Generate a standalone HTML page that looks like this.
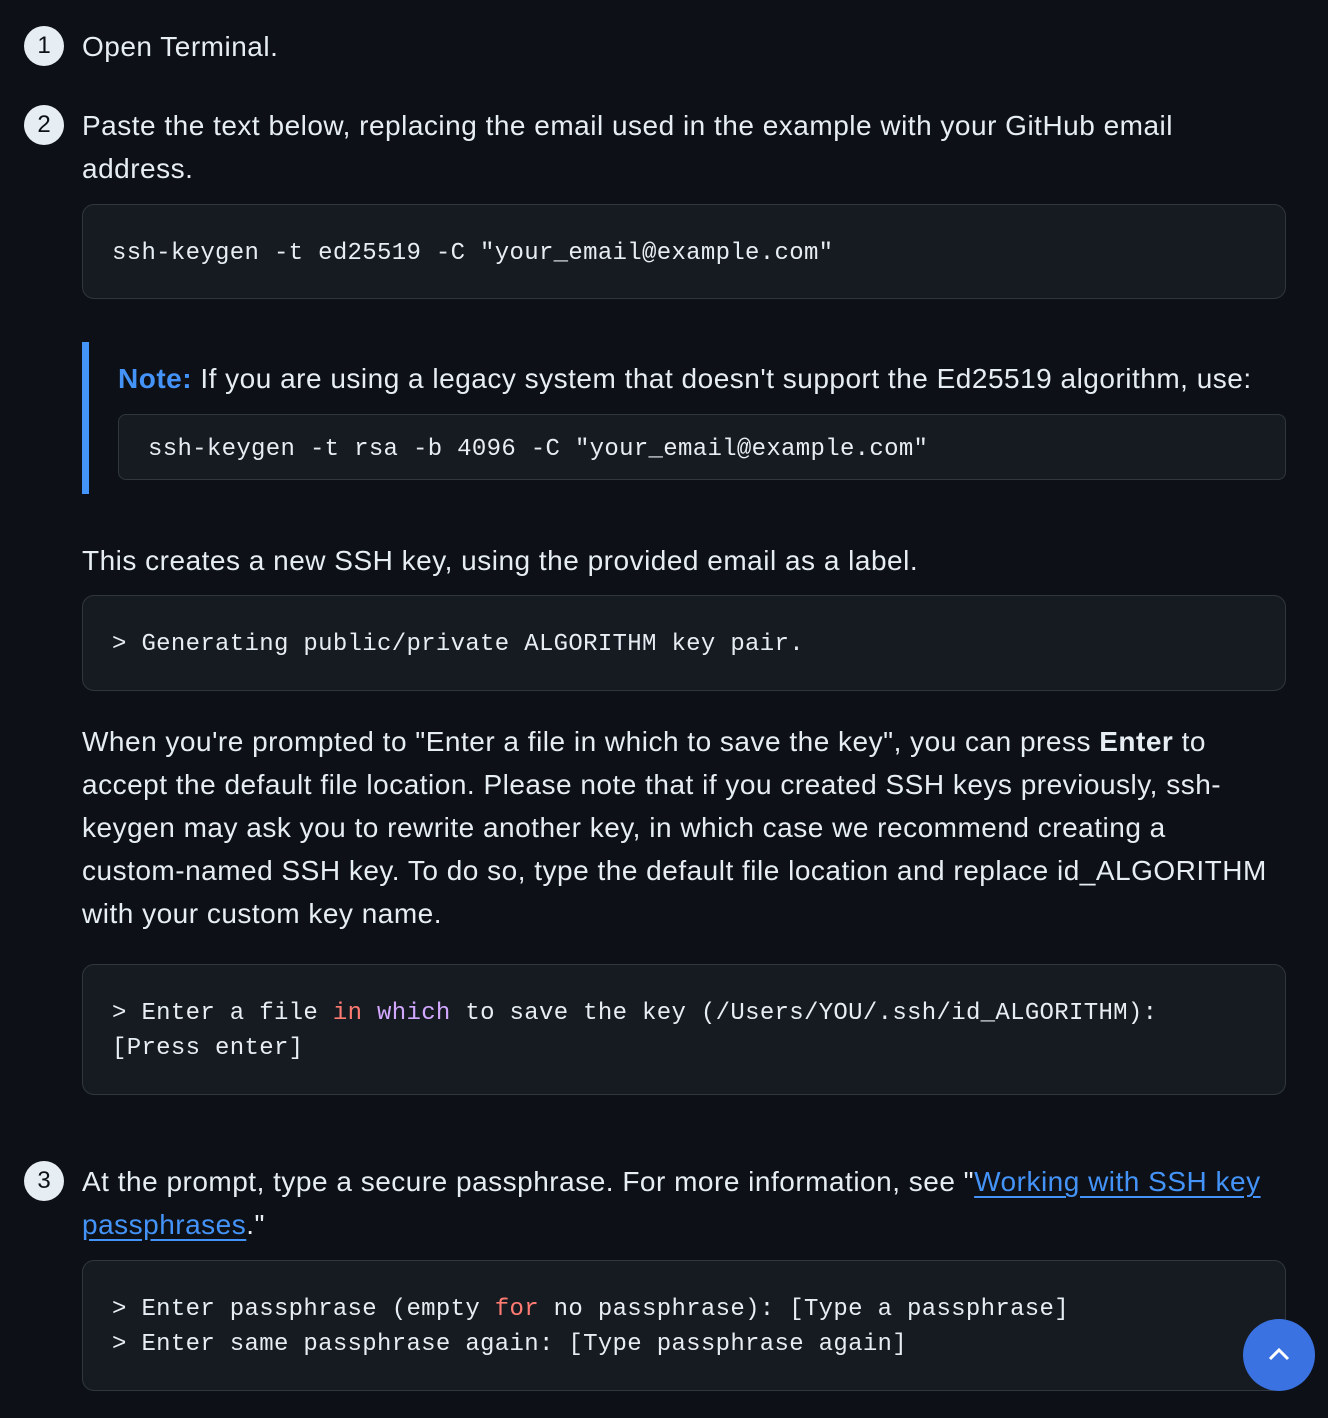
<!DOCTYPE html>
<html><head><meta charset="utf-8"><style>
body{margin:0;background:#0d1117;width:1328px;height:1418px;position:relative;overflow:hidden;font-family:"Liberation Sans",sans-serif;color:#e6edf3}
.t{position:absolute;left:82px;font-size:28px;letter-spacing:0.5px;white-space:nowrap;line-height:43px}
.c{position:absolute;width:40px;height:40px;border-radius:50%;background:#e6edf3;color:#0d1117;font-size:24px;text-align:center;line-height:40px;left:24px;font-weight:500}
.box{position:absolute;left:82px;width:1202px;background:#161b22;border:1px solid #30363d;border-radius:12px}
.m{position:absolute;font-family:"Liberation Mono",monospace;font-size:24px;letter-spacing:0.32px;white-space:pre;line-height:35px;color:#e6edf3}
a{color:#4493f8;text-decoration:underline;text-underline-offset:5px}
</style></head><body>
<div class="c" style="top:26px">1</div>
<div class="t" style="top:25px">Open Terminal.</div>
<div class="c" style="top:105px">2</div>
<div class="t" style="top:104px">Paste the text below, replacing the email used in the example with your GitHub email<br>address.</div>
<div class="box" style="top:204px;height:93px"></div>
<div class="m" style="left:112px;top:236px">ssh-keygen -t ed25519 -C "your_email@example.com"</div>
<div style="position:absolute;left:82px;top:342px;width:7px;height:152px;background:#4493f8"></div>
<div class="t" style="left:118px;top:357px"><span style="color:#4493f8;font-weight:bold">Note:</span> If you are using a legacy system that doesn't support the Ed25519 algorithm, use:</div>
<div class="box" style="left:118px;width:1166px;top:414px;height:64px;border-radius:8px"></div>
<div class="m" style="left:148px;top:432px">ssh-keygen -t rsa -b 4096 -C "your_email@example.com"</div>
<div class="t" style="top:539px">This creates a new SSH key, using the provided email as a label.</div>
<div class="box" style="top:595px;height:94px"></div>
<div class="m" style="left:112px;top:627px">&gt; Generating public/private ALGORITHM key pair.</div>
<div class="t" style="top:720px">When you're prompted to "Enter a file in which to save the key", you can press <b>Enter</b> to<br>accept the default file location. Please note that if you created SSH keys previously, ssh-<br>keygen may ask you to rewrite another key, in which case we recommend creating a<br>custom-named SSH key. To do so, type the default file location and replace id_ALGORITHM<br>with your custom key name.</div>
<div class="box" style="top:964px;height:129px"></div>
<div class="m" style="left:112px;top:996px">&gt; Enter a file <span style="color:#ff7b72">in</span> <span style="color:#d2a8ff">which</span> to save the key (/Users/YOU/.ssh/id_ALGORITHM):
[Press enter]</div>
<div class="c" style="top:1161px">3</div>
<div class="t" style="top:1160px">At the prompt, type a secure passphrase. For more information, see "<a>Working with SSH key</a><br><a>passphrases</a>."</div>
<div class="box" style="top:1260px;height:129px"></div>
<div class="m" style="left:112px;top:1292px">&gt; Enter passphrase (empty <span style="color:#ff7b72">for</span> no passphrase): [Type a passphrase]
&gt; Enter same passphrase again: [Type passphrase again]</div>
<div style="position:absolute;left:1243px;top:1319px;width:72px;height:72px;border-radius:50%;background:#3a72e2"></div>
<svg style="position:absolute;left:1243px;top:1319px" width="72" height="72"><path d="M27 40 L36 31 L45 40" stroke="#fff" stroke-width="3" fill="none"/></svg>
</body></html>
